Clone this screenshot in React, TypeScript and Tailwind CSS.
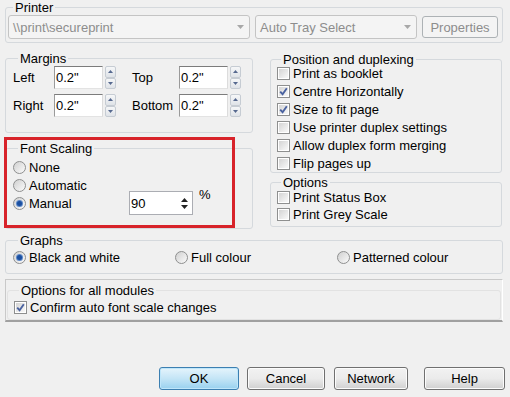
import React from "react";

function GroupBox({ label, className = "", legendClass = "ml-[5px]", children }: { label: string; className?: string; legendClass?: string; children: React.ReactNode }) {
  return (
    <fieldset className={`border border-[#d5d9dd] rounded-[3px] ${className}`}>
      <legend className={`${legendClass} px-[2px] leading-[15px]`}>{label}</legend>
      {children}
    </fieldset>
  );
}

function ComboArrow() {
  return (
    <svg width="7" height="4" viewBox="0 0 7 4" className="shrink-0">
      <path d="M0 0 H7 L3.5 4 Z" fill="#a8a8a8" />
    </svg>
  );
}

function Combo({ text, className }: { text: string; className: string }) {
  return (
    <div className={`h-[24px] border border-[#c4c4c4] rounded-[3px] bg-[#f4f4f4] flex items-center justify-between pl-[4px] pr-[5px] text-[#8d8d8d] ${className}`}>
      <span>{text}</span>
      <ComboArrow />
    </div>
  );
}

function Check({ checked = false }: { checked?: boolean }) {
  return (
    <span className="w-[13px] h-[13px] border border-[#8e8f8f] bg-white p-[1px] shrink-0 flex">
      <span className="flex-1 bg-gradient-to-br from-[#d4d4d4] to-[#f9f9f9] flex items-center justify-center">
        {checked && (
          <svg width="9" height="9" viewBox="0 0 9 9">
            <path d="M1.2 4.6 L3.6 7.2 L7.8 1.2" stroke="#4a62a0" strokeWidth="1.9" fill="none" />
          </svg>
        )}
      </span>
    </span>
  );
}

function Radio({ checked = false }: { checked?: boolean }) {
  return (
    <span className="w-[13px] h-[13px] rounded-full border border-[#8e8f8f] bg-gradient-to-br from-[#d0d0d0] to-[#fbfbfb] shrink-0 flex items-center justify-center">
      {checked && <span className="w-[5px] h-[5px] rounded-full bg-[#1b4fa0] shadow-[0_0_0_1px_#5d88c8]" />}
    </span>
  );
}

function CheckRow({ label, checked }: { label: string; checked?: boolean }) {
  return (
    <div className="h-[13px] flex items-center gap-[3px]">
      <Check checked={checked} />
      <span>{label}</span>
    </div>
  );
}

function RadioRow({ label, checked, className = "" }: { label: string; checked?: boolean; className?: string }) {
  return (
    <div className={`h-[18px] flex items-center gap-[3px] ${className}`}>
      <Radio checked={checked} />
      <span>{label}</span>
    </div>
  );
}

function SpinButtons() {
  return (
    <div className="flex flex-col ml-[2px] w-[11px] h-[23px]">
      {[true, false].map((up) => (
        <div key={String(up)} className="flex-1 border border-[#c6ccd3] rounded-[2px] bg-gradient-to-b from-[#f6f7f8] to-[#dfe3e8] flex items-center justify-center">
          <svg width="5" height="3" viewBox="0 0 5 3">
            <path d={up ? "M0 3 H5 L2.5 0 Z" : "M0 0 H5 L2.5 3 Z"} fill="#56698f" />
          </svg>
        </div>
      ))}
    </div>
  );
}

function MarginInput() {
  return (
    <div className="flex items-center">
      <div className="w-[49px] h-[23px] border border-[#abadb3] border-t-[#7c7c7c] border-l-[#9a9a9a] border-r-[#dcdcdc] border-b-[#e3e3e3] bg-white flex items-center pl-[1px]">{'0.2"'}</div>
      <SpinButtons />
    </div>
  );
}

function Button({ label, w, primary = false }: { label: string; w: string; primary?: boolean }) {
  return (
    <div
      className={`${w} h-[23px] rounded-[3px] border flex items-center justify-center ${
        primary
          ? "border-[#3c7fb1] bg-gradient-to-b from-[#e5f4fc] via-[#c4e5f6] to-[#98d1ef] shadow-[inset_0_0_0_1px_#bfe6fa]"
          : "border-[#707070] bg-gradient-to-b from-[#f2f2f2] via-[#ebebeb] to-[#d0d0d0] shadow-[inset_0_0_0_1px_#fcfcfc]"
      }`}
    >
      {label}
    </div>
  );
}

export default function App() {
  return (
    <div className="relative w-[510px] h-[397px] overflow-hidden bg-[#f0f0f0] px-[5px] text-[13px] leading-[15px] text-black font-['Liberation_Sans',Arial,sans-serif]">
      <GroupBox label="Printer" className="w-[498px] pl-[2px] pr-[4px] pb-[3px]">
        <div className="flex items-center">
          <Combo text={"\\\\print\\secureprint"} className="w-[242px]" />
          <Combo text="Auto Tray Select" className="w-[162px] ml-[5px] pl-[2px]" />
          <div className="ml-[5px] w-[76px] h-[22px] rounded-[3px] border border-[#adb2b5] bg-[#f4f4f4] text-[#8d8d8d] flex items-center justify-center">Properties</div>
        </div>
      </GroupBox>

      <div className="flex items-start gap-[17px]">
        <div className="w-[248px] flex flex-col">
          <GroupBox label="Margins" className="mt-[8px] pl-[7px] pb-[15px]">
            <div className="flex flex-col gap-[5px]">
              {[["Left", "Top"], ["Right", "Bottom"]].map(([a, b]) => (
                <div key={a} className="flex items-center h-[23px]">
                  <span className="w-[41px]">{a}</span>
                  <MarginInput />
                  <span className="w-[47px] ml-[16px]">{b}</span>
                  <MarginInput />
                </div>
              ))}
            </div>
          </GroupBox>

          <GroupBox label="Font Scaling" className="mt-[8px] pl-[7px] pt-[2px] pb-[16px]">
            <RadioRow label="None" />
            <RadioRow label="Automatic" />
            <div className="h-[18px] flex items-center">
              <RadioRow label="Manual" checked className="w-[116px]" />
              <div className="w-[64px] h-[24px] shrink-0 border border-[#abadb3] bg-white flex items-center justify-between pl-[1px] pr-[4px]">
                <span>90</span>
                <div className="flex flex-col gap-[3px]">
                  <svg width="7" height="4" viewBox="0 0 7 4"><path d="M0 4 H7 L3.5 0 Z" fill="#222" /></svg>
                  <svg width="7" height="4" viewBox="0 0 7 4"><path d="M0 0 H7 L3.5 4 Z" fill="#222" /></svg>
                </div>
              </div>
              <span className="ml-[6px] mb-[17px]">%</span>
            </div>
          </GroupBox>
        </div>

        <div className="w-[232px] flex flex-col">
          <GroupBox label="Position and duplexing" legendClass="ml-[4px]" className="mt-[9px] pl-[6px] pb-[2px]">
            <div className="flex flex-col gap-[5px]">
              <CheckRow label="Print as booklet" />
              <CheckRow label="Centre Horizontally" checked />
              <CheckRow label="Size to fit page" checked />
              <CheckRow label="Use printer duplex settings" />
              <CheckRow label="Allow duplex form merging" />
              <CheckRow label="Flip pages up" />
            </div>
          </GroupBox>
          <GroupBox label="Options" legendClass="ml-[4px]" className="mt-[2px] pl-[6px] pt-[1px] pb-[5px]">
            <div className="flex flex-col gap-[4px]">
              <CheckRow label="Print Status Box" />
              <CheckRow label="Print Grey Scale" />
            </div>
          </GroupBox>
        </div>
      </div>

      <GroupBox label="Graphs" className="mt-[4px] w-[498px] pl-[7px] pb-[7px]">
        <div className="grid grid-cols-[162px_162px_1fr]">
          <RadioRow label="Black and white" checked />
          <RadioRow label="Full colour" />
          <RadioRow label="Patterned colour" />
        </div>
      </GroupBox>

      <div className="mt-[5px] w-[498px] border border-t-[#c9c9c9] border-l-[#c9c9c9] border-r-white border-b-2 border-b-[#a0a0a0] pl-[1px] pr-[1px]">
        <GroupBox label="Options for all modules" className="mt-[3px] pl-[6px] pt-[3px] pb-[5px] border-[#e2e2e2]">
          <CheckRow label="Confirm auto font scale changes" checked />
        </GroupBox>
      </div>

      <div className="mt-[45px] flex justify-end">
        <Button label="OK" w="w-[80px]" primary />
        <div className="ml-[8px]"><Button label="Cancel" w="w-[78px]" /></div>
        <div className="ml-[9px]"><Button label="Network" w="w-[74px]" /></div>
        <div className="ml-[16px]"><Button label="Help" w="w-[81px]" /></div>
      </div>

      <div className="absolute left-[4px] top-[137px] w-[231px] h-[91px] border-[3px] border-[#d8232a] pointer-events-none" />
    </div>
  );
}
